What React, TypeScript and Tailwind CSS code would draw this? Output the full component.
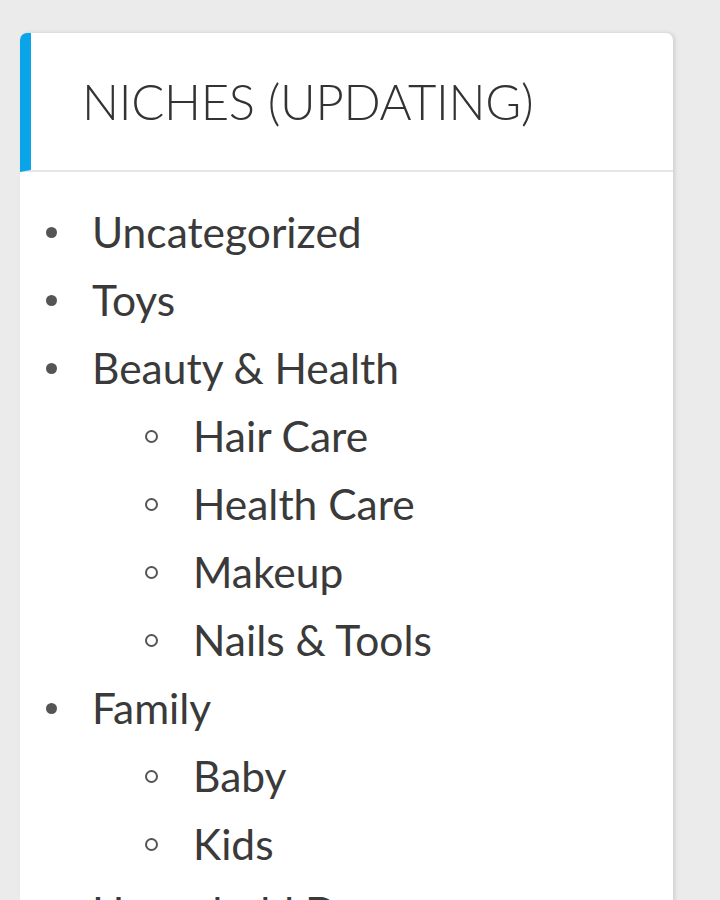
const items: { name: string; children?: string[] }[] = [
    { name: "Uncategorized" },
    { name: "Toys" },
    { name: "Beauty & Health", children: ["Hair Care", "Health Care", "Makeup", "Nails & Tools"] },
    { name: "Family", children: ["Baby", "Kids"] },
    { name: "Household Decor" },
    { name: "Pets" },
];

const Row = ({ label, nested }: { label: string; nested?: boolean }) => (
    <li className={`flex items-center h-[68px] ${nested ? "pl-[125px]" : "pl-[26px]"}`}>
        {nested ? (
            <span className="w-[13px] h-[13px] rounded-full border-[2px] border-[#555] mr-[35px] shrink-0"></span>
        ) : (
            <span className="w-[11px] h-[11px] rounded-full bg-[#555] mr-[35px] shrink-0"></span>
        )}
        <span className="text-[42.5px] text-[#3a3a3a] leading-none">{label}</span>
    </li>
);

export default function App() {
    return (
        <div className="w-[720px] h-[900px] overflow-hidden bg-[#ebebeb] pt-[33px] pl-[20px]" style={{ fontFamily: "Lato, 'Open Sans', sans-serif" }}>
            <div className="w-[653px] bg-white rounded-t-[7px] shadow-[2px_0_4px_rgba(0,0,0,0.12)]">
                {/* header */}
                <div className="flex items-center h-[139px] border-l-[11px] border-[#0aa5e8] rounded-tl-[7px] border-b-[2px] border-b-[#e6e6e6]">
                    <h3 className="pl-[51px] text-[49px] font-light text-[#333] uppercase tracking-[-0.3px]">Niches (Updating)</h3>
                </div>
                {/* list */}
                <ul className="pt-[26px]">
                    {items.map((item) => (
                        <div key={item.name}>
                            <Row label={item.name} />
                            {item.children?.map((c) => (
                                <Row key={c} label={c} nested />
                            ))}
                        </div>
                    ))}
                </ul>
            </div>
        </div>
    );
}
